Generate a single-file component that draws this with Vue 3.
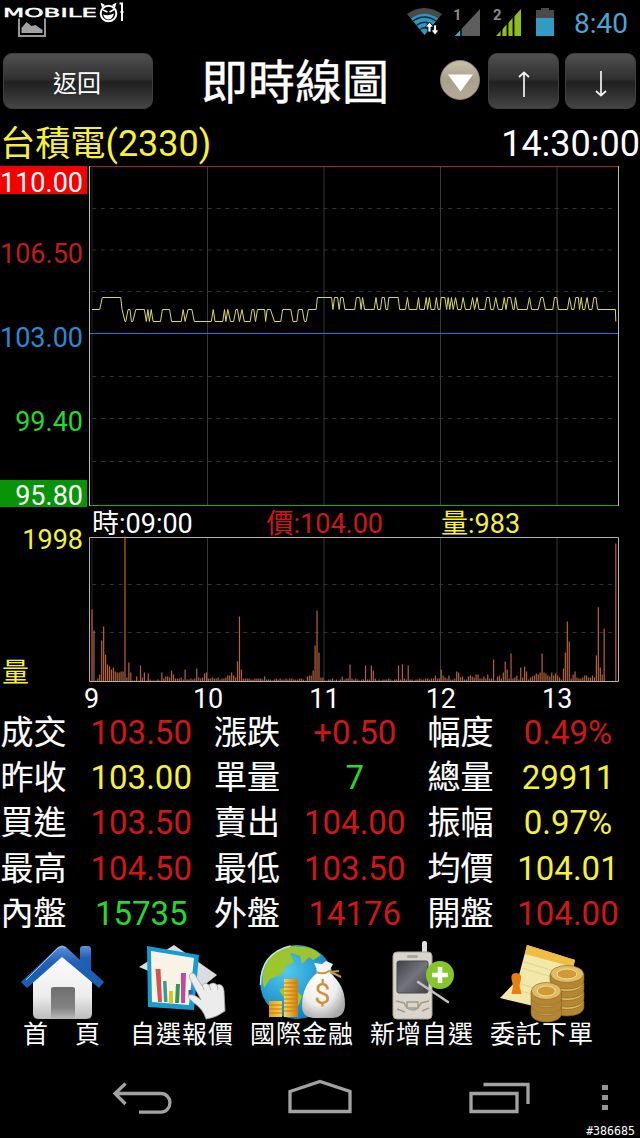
<template>
  <div class="screen">
    <!-- 狀態列 -->
    <header class="status">
      <svg class="brand" width="128" height="40" viewBox="0 0 128 40">
        <path d="M19 18.5V36H45V18.5" fill="none" stroke="#969696" stroke-width="2" />
        <path d="M21.5 33V28l5-6 5 4 4-1 7 5v3z" fill="#a2a2a2" />
        <text x="3" y="17" textLength="94" lengthAdjust="spacingAndGlyphs">MOBILE</text>
        <circle cx="108.5" cy="13.5" r="7.8" fill="#000" stroke="#fff" stroke-width="2" />
        <path d="M102 8 100.500 2.500 105 5M115 8 116.500 2.500 112 5" fill="#fff" />
        <path d="M103 10l4.500 2M114 9.500l-4.500 2.500" stroke="#fff" stroke-width="1.500" />
        <path d="M103 14.500q5.500 2 11-1-1.500 6-5.500 6-4 0-5.500-5z" fill="#fff" />
        <path d="M119.500 3.500h2.500V21M120.500 12h3" fill="none" stroke="#fff" stroke-width="2" />
      </svg>
      <div class="status-right">
        <svg width="36" height="28" viewBox="0 0 36 28">
          <path d="M0 6Q17 -6 35 6L17.500 27Z" fill="#474b4c" />
          <path d="M4 10.500Q17.500 1 31 10.500L17.500 27Z" fill="#2f94c0" />
          <path d="M6 13Q17.500 5 29 13M9.500 17.500Q17.500 11 25.500 17.500M13 21.500Q17.500 18 22 21.500" fill="none" stroke="#0a2833" stroke-width="1.300" />
          <path d="M22.500 14l-4 5h2.500v5h3v-5h2.500zM28 27l-4-5h2.500v-5h3v5h2.500z" fill="#fff" stroke="#000" stroke-width=".8" />
        </svg>
        <svg class="sig1" width="28" height="30" viewBox="0 0 28 30">
          <text x="0" y="12">1</text>
          <path d="M27 1V28H2Z" fill="#5e5e5e" />
          <path d="M7 22.500V28H2Z" fill="#3ba5cf" />
          <path d="M8 21v8" stroke="#000" stroke-width="1.300" />
        </svg>
        <svg class="sig2" width="29" height="30" viewBox="0 0 29 30">
          <text x="0" y="12">2</text>
          <path d="M28 1V28H3Z" fill="#8fbd1b" />
          <path d="M8.500 18v11M14.500 12v17M20.500 5v24" stroke="#000" stroke-width="1.800" />
        </svg>
        <svg class="battery" width="18" height="28" viewBox="0 0 18 28">
          <path d="M0 2h5V0h8v2h5v8H0z" fill="#4a4a4a" />
          <path d="M0 10h18v18H0z" fill="#319bc4" />
        </svg>
        <span class="clock">8:40</span>
      </div>
    </header>

    <!-- 標題列 -->
    <div class="titlebar">
      <button class="btn back">返回</button>
      <h1>即時線圖</h1>
      <svg class="drop" width="42" height="42" viewBox="0 0 42 42">
        <defs>
          <linearGradient id="dropFill" x1="0" y1="0" x2="0" y2="1">
            <stop offset="0" stop-color="#c9c0ac" />
            <stop offset=".5" stop-color="#aaa08a" />
            <stop offset="1" stop-color="#b5aa98" />
          </linearGradient>
        </defs>
        <circle cx="21" cy="21" r="19.500" fill="url(#dropFill)" stroke="#8b8375" />
        <path d="M9 15.500h25L21.500 32.500z" fill="#fff" />
      </svg>
      <button class="btn arrow">
        <svg width="14" height="28" viewBox="0 0 14 28"><path d="M7 27V3M2 7l5-4.500L12 7" /></svg>
      </button>
      <button class="btn arrow">
        <svg width="14" height="28" viewBox="0 0 14 28"><path d="M7 1v24M2 21l5 4.500L12 21" /></svg>
      </button>
    </div>

    <div class="stock">
      <span class="yellow"><span class="name">台積電</span>(2330)</span>
      <span>14:30:00</span>
    </div>

    <!-- 分時走勢 -->
    <div class="chart-row">
      <div class="axis">
        <span class="limit up">110.00</span>
        <div class="axis-mid">
          <span class="dim-red">106.50</span>
          <span class="blue">103.00</span>
          <span class="green">99.40</span>
        </div>
        <span class="limit down">95.80</span>
      </div>
      <svg width="531" height="342" viewBox="89 165 531 342">
        <path v-for="y in [208.5, 250, 291.5, 376.5, 418.5, 461.5]" :key="y" class="dash" :d="`M92 ${y}H612`" />
        <path v-for="x in hourLines" :key="x" class="hour" :d="`M${x} 166V506`" />
        <path d="M92 166V506" stroke="#252525" />
        <path d="M89.500 166V506M618.500 166V506" stroke="#bdbdbd" />
        <path class="edge-up" d="M90 166.500H618" />
        <path class="edge-down" d="M90 505.500H618" />
        <path class="base" d="M90 333.500H618" />
        <polyline class="price" :points="pricePoints" />
      </svg>
    </div>

    <div class="info">
      <span>時:09:00</span>
      <span class="red">價:104.00</span>
      <span class="yellow">量:983</span>
    </div>

    <!-- 成交量 -->
    <div class="chart-row">
      <div class="axis vol yellow">
        <span>1998</span>
        <span class="unit">量</span>
      </div>
      <svg width="531" height="147" viewBox="89 536 531 147">
        <path v-for="y in [584.5, 632.5]" :key="y" class="dash" :d="`M92 ${y}H612`" />
        <path v-for="x in hourLines" :key="x" class="hour" :d="`M${x} 537V682`" />
        <path d="M92 537V682" stroke="#252525" />
        <path class="bars" :d="volumePath" />
        <path d="M89.500 537.500H618.500V681.500H89.500Z" fill="none" stroke="#b2b2b2" />
      </svg>
    </div>
    <div class="hours">
      <span v-for="h in [9, 10, 11, 12, 13]" :key="h">{{ h }}</span>
    </div>

    <!-- 報價明細 -->
    <div class="quotes">
      <div v-for="q in quotes" :key="q.label" class="quote">
        <span>{{ q.label }}</span>
        <b :class="q.color">{{ q.value }}</b>
      </div>
    </div>

    <!-- 功能選單 -->
    <nav class="menu">
      <a>
        <svg width="100" height="82" viewBox="12 940 100 82">
          <defs>
            <linearGradient id="wall" x1="0" y1="0" x2="0" y2="1">
              <stop offset="0" stop-color="#fff" /><stop offset=".65" stop-color="#ececec" /><stop offset="1" stop-color="#bcbcbc" />
            </linearGradient>
            <linearGradient id="roof" x1="0" y1="0" x2="0" y2="1">
              <stop offset="0" stop-color="#5b93da" /><stop offset=".4" stop-color="#225fb5" /><stop offset="1" stop-color="#1460b0" />
            </linearGradient>
            <linearGradient id="door" x1="0" y1="0" x2="0" y2="1">
              <stop offset="0" stop-color="#6f6f6f" /><stop offset=".65" stop-color="#838383" /><stop offset="1" stop-color="#bbb" />
            </linearGradient>
          </defs>
          <rect x="80" y="945" width="11" height="30" rx="3" fill="url(#roof)" />
          <path d="M33 980L62 953l30 28v32q0 5-6 5H39q-6 0-6-5z" fill="url(#wall)" />
          <path d="M21 981L58 946q4-3 8 0l38 35-5 6-37-31L27 987z" fill="url(#roof)" />
          <path d="M26 979L58 947q4-3 8 0" fill="none" stroke="#a7c6ed" stroke-width="1" />
          <path d="M51 1018V988q0-2 3-2h18q3 0 3 2v30z" fill="url(#door)" />
        </svg>
        <span>首　頁</span>
      </a>
      <a>
        <svg width="100" height="82" viewBox="132 940 100 82">
          <path d="M139 966L174 944l43 30-20 16z" fill="#d9dde0" />
          <path d="M147 945l52 9-5 55-46-3z" fill="#169cce" />
          <path d="M151 950l43 7-5 47-37-3z" fill="#f8f3e5" />
          <path d="M155.500 968h5l1.500 33h-4z" fill="#d35353" />
          <path d="M163 980h3.500l1 21h-3.500z" fill="#3799a0" />
          <path d="M169 990h4v12h-4z" fill="#ddc31a" />
          <path d="M176 983h4l-1 19h-4z" fill="#2b9b50" />
          <path d="M181 972h5l-1 30h-4z" fill="#c1489c" />
          <path d="M188.500 989h4v6h-4z" fill="#2462aa" />
          <path d="M206 1018q-3-10-12-16-8-7-5-8 6-1 12 5l-11-21q-2-5 2-6 3 0 5 5l5 8q2-5 7-1 4-4 8 0 6-2 7 6l1 20q-9 7-19 8z" fill="#ececec" stroke="#aaa" stroke-width=".8" />
          <path d="M202 984l2 5M209 984l2 5M217 984l1 5" stroke="#b5b5b5" />
        </svg>
        <span>自選報價</span>
      </a>
      <a>
        <svg width="100" height="82" viewBox="252 940 100 82">
          <defs>
            <linearGradient id="coin" x1="0" y1="0" x2="1" y2="0">
              <stop offset="0" stop-color="#dfa01b" /><stop offset=".5" stop-color="#ffd75a" /><stop offset="1" stop-color="#ca7c10" />
            </linearGradient>
            <radialGradient id="globe" cx=".35" cy=".35" r=".7">
              <stop offset="0" stop-color="#55c8ee" /><stop offset="1" stop-color="#087fc0" />
            </radialGradient>
            <radialGradient id="bag" cx=".4" cy=".35" r=".7">
              <stop offset="0" stop-color="#fff" /><stop offset=".6" stop-color="#eee" /><stop offset="1" stop-color="#aaa" />
            </radialGradient>
          </defs>
          <circle cx="297" cy="981" r="37" fill="url(#globe)" />
          <path d="M273 953q10-8 23-8l1 4-7 4 4 8-8 4-4 8-12 5-6 9q-5-18 9-34zM296 946q15-2 25 8l-8 5-4-3-7 7-2-8-8-3zM279 989l11-6 12 12-3 9-8 3z" fill="#9fc52c" />
          <path d="M260.500 984q0-32 30-39" fill="none" stroke="#b8ecf9" stroke-width="1.500" />
          <path d="M284 978h14v38h-14zM269 1000h13v16h-13z" fill="url(#coin)" />
          <path d="M284 982h14m-14 4h14m-14 4h14m-14 4h14m-14 4h14m-14 4h14m-14 4h14m-14 4h14M269 1004h13m-13 4h13m-13 4h13" stroke="#c57a10" />
          <path d="M317 972q0-5-3-10l8 1 4-3 7 3q-3 4-3 9 15 12 15 31 0 13-12 14h-20q-11-1-11-12 0-21 15-33z" fill="url(#bag)" />
          <path d="M316 971q8 3 13-1l12 6M330 971l9-1" fill="none" stroke="#c79a48" stroke-width="2" />
          <text class="dollar" x="323" y="1003">$</text>
        </svg>
        <span>國際金融</span>
      </a>
      <a>
        <svg width="100" height="82" viewBox="372 940 100 82">
          <defs>
            <linearGradient id="lcd" x1="0" y1="0" x2="1" y2="1">
              <stop offset="0" stop-color="#3e3e46" /><stop offset=".5" stop-color="#74747c" /><stop offset="1" stop-color="#41414a" />
            </linearGradient>
          </defs>
          <rect x="422" y="940" width="5" height="14" rx="2" fill="#e1dfda" />
          <rect x="393" y="951" width="39" height="67" rx="4" fill="#d9d5ca" stroke="#a8a398" />
          <rect x="397" y="960" width="31" height="32" rx="2" fill="url(#lcd)" stroke="#494950" />
          <rect x="407" y="954" width="11" height="3" rx="1.500" fill="#aaa69a" />
          <path d="M396 1000l8 2 3 5q6 4 11 0l3-5 8-2M397 1008l8 3m24-4l-7 3M407 1001h11v6h-11z" fill="none" stroke="#a29c91" stroke-width="1.500" />
          <circle cx="440" cy="974" r="14" fill="#84c72a" />
          <path d="M440 966v16m-8-8h16" stroke="#fff" stroke-width="4.500" />
          <path d="M418 981l30 20" stroke="#c6c3bc" stroke-width="2.500" stroke-linecap="round" />
        </svg>
        <span>新增自選</span>
      </a>
      <a>
        <svg width="100" height="82" viewBox="492 940 100 82">
          <path d="M527 944l48 15-12 53-63-15 18-19z" fill="#f2e8a9" />
          <path d="M527 944l48 15-2 7-48-13z" fill="#efbd41" />
          <path d="M524 961l44 13m-46-7l40 12m-41 4l32 10m-35-4l30 9" stroke="#e3d387" />
          <path d="M511.500 978q-1-6 4.500-6 6 0 5 6l-1.500 7 2 8h-10l1.500-8z" fill="#e97c12" />
          <g v-for="c in coinStack" :key="c.x + '-' + c.y" :transform="`translate(${c.x} ${c.y})`">
            <path class="coin-side" d="M0 0v6c0 12 34 12 34 0V0z" :transform="`scale(${c.s} 1)`" />
            <ellipse class="coin-top" :cx="17 * c.s" cy="0" :rx="16.5 * c.s" ry="8.5" />
            <ellipse class="coin-ring" :cx="17 * c.s" cy="0" :rx="10 * c.s" ry="5" />
          </g>
        </svg>
        <span>委託下單</span>
      </a>
    </nav>

    <!-- 系統導覽鍵 -->
    <footer class="sysbar">
      <svg width="640" height="90" viewBox="0 1048 640 90">
        <g fill="none" stroke="#a2a2a2" stroke-width="3.300">
          <path d="M125.500 1082.500l-10.500 10 10.500 10.500M116 1092.500h45a9 9.300 0 0 1 0 18.600h-22" />
          <path d="M290 1090.500l30-10 30 10v20h-60z" />
          <path d="M471 1092.500h46v18h-46zM483.500 1083.500h44.500v19.500" />
        </g>
        <path d="M602 1084h6v5h-6zm0 10h6v5h-6zm0 10h6v5h-6z" fill="#969696" />
      </svg>
      <span class="serial">#386685</span>
    </footer>
  </div>
</template>

<script setup>
import { computed } from 'vue'

const START_X = 92
const MINUTE = 1.94 // 每分鐘寬度
const hourLines = [207.5, 324, 440.5, 557]

// 價位對應的 y 座標
const levelY = { 103.5: 321.5, 104: 309.5, 104.5: 297.5 }

// [起始分, 結束分, 價格]
const H = 104.5
const M = 104
const L = 103.5
const priceRuns = [
  [0, 4, M], [5.3, 14.8, H], [15.5, 15.5, M], [17, 17.4, L], [18.6, 19.6, M], [20.3, 21, L], [22.6, 27, M], [28, 28, L],
  [28.8, 28.8, M], [29.6, 29.6, L], [30.5, 30.5, M], [31.5, 35.3, L], [36.3, 40, M], [41, 46, L], [47, 47, M], [48, 48, L],
  [49.5, 51.5, M], [52.7, 61.5, L], [62.5, 62.5, M], [63.4, 67.4, L], [68.3, 68.3, M], [69, 69, L], [70, 70, M], [71.4, 73, L],
  [74.2, 75, M], [76, 76, L], [77.3, 77.3, M], [78.5, 81.5, L], [82.5, 83.4, M], [84.3, 84.3, L], [85.3, 89, M], [89.5, 89.5, L],
  [90.3, 92, M], [94, 97.3, L], [98.3, 102.5, M], [103.6, 105.6, L], [106.4, 108.4, M], [109.5, 110.4, L], [111.5, 115.5, M],
  [116.2, 123.5, H], [124.2, 124.2, M], [125, 126.6, H], [127.4, 127.4, M], [128.2, 129.4, H], [130.4, 135.4, M], [136.3, 138, H],
  [138.7, 138.7, M], [139.5, 139.5, H], [140.5, 145.4, M], [146.4, 146.4, H], [147.3, 148.7, M], [149.5, 150.7, H], [151.5, 152.4, M],
  [153, 157.8, H], [158.6, 161.6, M], [162.6, 162.6, H], [163.5, 167.4, M], [168.3, 168.3, H], [169, 171.3, M], [172.3, 172.3, H],
  [173, 173, M], [173.9, 173.9, H], [174.8, 176.6, M], [177.5, 177.5, H], [178.4, 179.4, M], [180, 181.9, H], [182.8, 182.8, M],
  [183.6, 183.6, H], [184.4, 184.4, M], [185.3, 185.3, H], [186.2, 186.2, M], [187.4, 187.4, H], [188.5, 190.2, M], [191.3, 191.3, H],
  [192.5, 195, M], [196.2, 196.2, H], [197.2, 197.2, M], [198.5, 198.5, H], [199.5, 202.4, M], [203.5, 204.7, H], [205.6, 207, M],
  [208.1, 208.1, H], [209.4, 211.5, M], [212.5, 212.5, H], [213.4, 213.4, M], [214.4, 215.8, H], [217, 217.6, M], [218.3, 218.3, H],
  [219.3, 224.3, M], [225.5, 225.5, H], [226.6, 230, M], [231.4, 232.5, H], [233.7, 237.5, M], [238.4, 239.6, H], [240.4, 245.1, M],
  [246.1, 246.1, H], [247.3, 248.4, M], [249.4, 250.7, H], [251.3, 251.3, M], [252.2, 252.2, H], [253, 254, M], [255.2, 255.2, H],
  [256.2, 257.7, M], [258.7, 259.8, H], [260.6, 269.8, M], [270, 270, L],
]

// 每分鐘成交量柱高
const volumes = [
  72, 51, 1, 3, 7, 41, 55, 27, 17, 15, 12, 14, 10, 9, 9, 10, 10, 145, 4, 19,
  9, 1, 1, 5, 1, 16, 4, 9, 1, 8, 2, 1, 1, 1, 2, 1, 9, 3, 5, 5,
  4, 11, 7, 3, 3, 3, 4, 2, 12, 2, 2, 3, 2, 3, 13, 4, 3, 4, 8, 9,
  3, 3, 4, 3, 3, 4, 2, 3, 3, 4, 6, 6, 9, 6, 4, 20, 65, 12, 3, 3,
  3, 3, 2, 2, 3, 3, 3, 3, 2, 5, 2, 2, 2, 1, 2, 3, 2, 3, 2, 2,
  3, 2, 3, 3, 2, 2, 2, 3, 3, 2, 1, 5, 6, 6, 11, 36, 71, 29, 4, 4,
  1, 1, 2, 2, 3, 1, 2, 1, 2, 5, 2, 3, 3, 17, 3, 2, 3, 2, 1, 2,
  2, 16, 2, 2, 16, 11, 3, 1, 2, 1, 2, 2, 2, 3, 2, 1, 2, 2, 16, 2,
  17, 3, 2, 16, 2, 2, 1, 2, 2, 3, 2, 2, 3, 3, 2, 3, 3, 6, 3, 3,
  12, 6, 4, 3, 6, 2, 2, 3, 10, 9, 4, 5, 2, 2, 5, 6, 5, 4, 7, 7,
  3, 3, 5, 3, 7, 3, 3, 22, 1, 5, 6, 3, 9, 20, 12, 3, 28, 3, 4, 6,
  2, 14, 4, 15, 10, 2, 4, 5, 6, 8, 7, 9, 28, 9, 8, 6, 5, 9, 6, 8,
  6, 4, 2, 13, 29, 60, 40, 3, 7, 10, 4, 3, 3, 4, 6, 6, 4, 4, 6, 4,
  26, 74, 14, 7, 53, 0, 0, 0, 0, 0, 138,
]

const quotes = [
  { label: '成交', value: '103.50', color: 'red' },
  { label: '漲跌', value: '+0.50', color: 'red' },
  { label: '幅度', value: '0.49%', color: 'red' },
  { label: '昨收', value: '103.00', color: 'yellow' },
  { label: '單量', value: '7', color: 'green' },
  { label: '總量', value: '29911', color: 'yellow' },
  { label: '買進', value: '103.50', color: 'red' },
  { label: '賣出', value: '104.00', color: 'red' },
  { label: '振幅', value: '0.97%', color: 'yellow' },
  { label: '最高', value: '104.50', color: 'red' },
  { label: '最低', value: '103.50', color: 'red' },
  { label: '均價', value: '104.01', color: 'yellow' },
  { label: '內盤', value: '15735', color: 'green' },
  { label: '外盤', value: '14176', color: 'red' },
  { label: '開盤', value: '104.00', color: 'red' },
]

// 由下往上疊
const coinStack = [
  { x: 550, y: 1000, s: 1 },
  { x: 550, y: 991, s: 1 },
  { x: 550, y: 982, s: 1 },
  { x: 550, y: 973, s: 1 },
  { x: 531, y: 1006, s: 0.9 },
  { x: 531, y: 998, s: 0.9 },
  { x: 531, y: 990, s: 0.9 },
]

const xOf = (minute) => +(START_X + minute * MINUTE).toFixed(2)

const pricePoints = computed(() =>
  priceRuns.map(([from, to, p]) => `${xOf(from)},${levelY[p]} ${xOf(to)},${levelY[p]}`).join(' ')
)
const volumePath = computed(() =>
  volumes.map((v, i) => (v ? `M${xOf(i)} 681.5v-${v}` : '')).join('')
)
</script>

<style>
body { margin: 0; background: #000; }
</style>

<style scoped>
.screen { width: 640px; height: 1138px; overflow: hidden; background: #000; color: #fff; font-family: Roboto, "Noto Sans CJK TC", sans-serif; }
svg { display: block; flex-shrink: 0; overflow: visible; }
.red { color: #d01616; }
.dim-red { color: #bf1d1d; }
.yellow { color: #f5f13b; }
.green { color: #22da2c; }
.blue { color: #2b89d2; }

.status { display: flex; justify-content: space-between; height: 53px; }
.brand text { font: 13px "DejaVu Sans", sans-serif; fill: #fff; stroke: #fff; stroke-width: .5; }
.status-right { display: flex; align-items: flex-start; padding: 8px 12px 0 0; }
.status-right text { font: bold 15px Roboto, sans-serif; fill: #8a8a8a; }
.sig1 { margin-left: 10px; }
.sig2 { margin-left: 12px; }
.battery { margin-left: 14px; }
.clock { margin-left: 20px; font-size: 28px; line-height: 31px; color: #48a5d3; }

.titlebar { display: flex; align-items: center; height: 56px; padding: 0 4px 0 3px; }
.btn { box-sizing: border-box; height: 56px; padding: 0; border: 1px solid #3e3e3e; border-radius: 9px; background: linear-gradient(#505050, #303030 46%, #202020 52%, #2b2b2b 68%, #454545); color: #fff; font: 24px Roboto, "Noto Sans CJK TC", sans-serif; display: flex; align-items: center; justify-content: center; flex-shrink: 0; }
.btn path { fill: none; stroke: #f2f2f2; stroke-width: 1.700; }
.back { width: 150px; padding-right: 2px; }
.arrow { width: 71px; margin-left: 6px; padding-top: 6px; }
.drop { margin: -3px 0 0 -2px; }
.drop + .arrow { margin-left: 7px; }
h1 { flex: 1; margin: 0; padding: 4px 0 0 48px; font-size: 47px; font-weight: 400; line-height: 56px; white-space: nowrap; -webkit-text-stroke: .4px #fff; }

.stock { display: flex; justify-content: space-between; height: 57px; line-height: 70px; font-size: 36px; white-space: nowrap; }
.name { font-size: 35.200px; }

.chart-row { display: flex; margin-top: -1px; }
.axis { width: 87px; margin-right: 2px; font-size: 27px; display: flex; flex-direction: column; flex-shrink: 0; text-align: right; }
.axis span { padding-right: 4px; line-height: 31px; }
.axis .limit { height: 28px; line-height: 35px; margin-top: 1px; }
.axis .up { background: #f50000; }
.axis .down { height: 27px; line-height: 33px; background: #079407; margin-top: 0; }
.axis-mid { display: flex; flex-direction: column; gap: 53px; height: 241px; padding-top: 45px; }
.dash { fill: none; stroke: #333; stroke-dasharray: 4 4.900; }
.hour { stroke: #373737; }
.edge-up { stroke: #b01c20; }
.edge-down { stroke: #1fa526; }
.base { stroke: #1e74dc; }
.price { fill: none; stroke: #dcd963; stroke-width: 1; }
.bars { fill: none; stroke: #b5623a; stroke-width: 1.200; }

.info { display: grid; grid-template-columns: 174.500px 174.500px auto; height: 30px; padding-left: 92px; font-size: 27px; line-height: 34px; }
.axis.vol { justify-content: space-between; }
.axis.vol span { line-height: 9px; }
.axis.vol .unit { text-align: left; padding-left: 2px; line-height: 19px; }
.hours { display: grid; grid-template-columns: repeat(5, 116.400px); margin-left: 33.500px; height: 27px; font-size: 27px; line-height: 33px; text-align: center; }

.quotes { display: grid; grid-template-columns: 213.500px 213.500px 213px; grid-auto-rows: 45.200px; font-size: 33px; line-height: 45px; }
.quote { display: grid; grid-template-columns: 71px 1fr; white-space: nowrap; }
.quote span { -webkit-text-stroke: .15px #fff; padding-left: .500px; }
.quote b { font-weight: 400; text-align: center; margin-right: 2px; }

.menu { display: grid; grid-template-columns: repeat(5, 120px); height: 108px; padding: 5px 0 0 2px; }
.menu a { display: flex; flex-direction: column; align-items: center; font-size: 25px; letter-spacing: 1px; line-height: 26px; white-space: nowrap; }
.menu a span { margin-top: -1px; }
.dollar { font: 29px Roboto, sans-serif; fill: #d08f3b; text-anchor: middle; }
.coin-side { fill: #b48532; stroke: #80601f; stroke-width: .6; }
.coin-top { fill: #dfbc67; stroke: #906d2a; stroke-width: .7; }
.coin-ring { fill: #d09a35; stroke: #f4dea0; }

.sysbar { position: relative; }
.serial { position: absolute; right: 5px; bottom: 1px; font: 11.600px/14px "DejaVu Sans Mono", monospace; }
</style>
